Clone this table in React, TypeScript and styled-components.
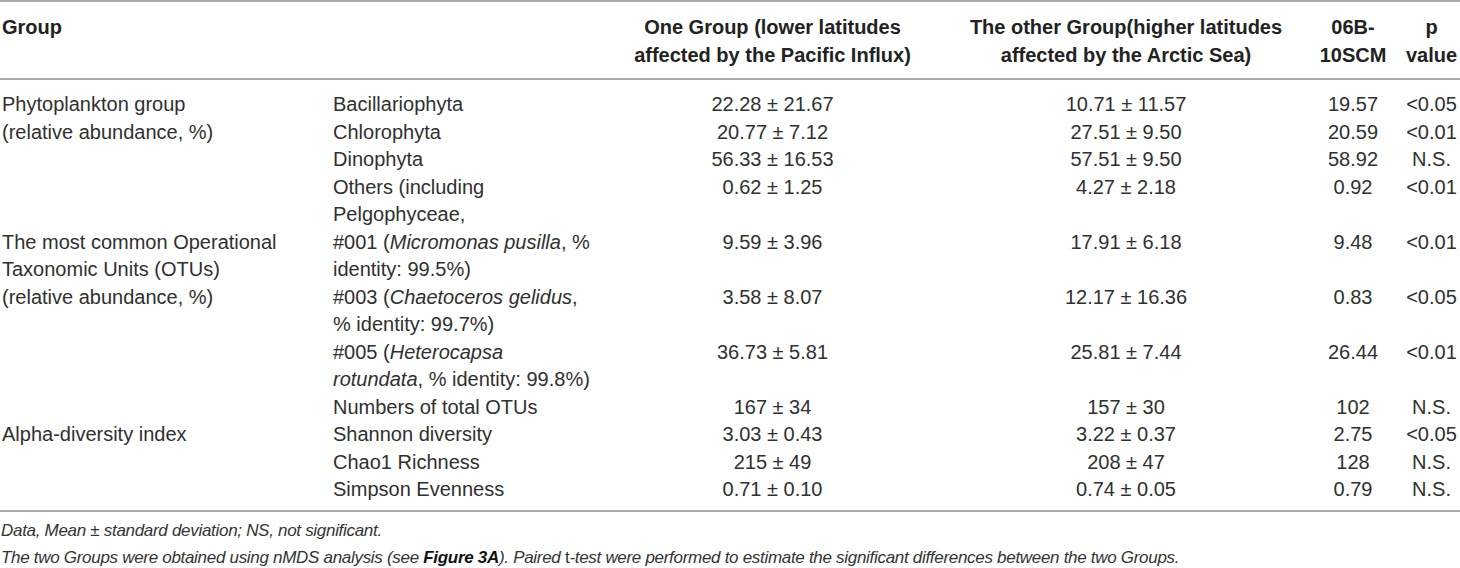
import styled, { createGlobalStyle } from "styled-components";

const GlobalStyle = createGlobalStyle`
  html, body {
    margin: 0;
    padding: 0;
    background: #ffffff;
  }
  body {
    font-family: "Liberation Sans", Arial, sans-serif;
    color: #303030;
  }
`;

const Wrapper = styled.div`
  width: 1460px;
`;

const Table = styled.table`
  width: 1460px;
  table-layout: fixed;
  border-collapse: collapse;
  font-size: 20px;
  line-height: 27.5px;
  border-top: 2px solid #a9a9a9;
  border-bottom: 2px solid #a9a9a9;
`;

const HeadCell = styled.th<{ $align?: string }>`
  text-align: ${(p) => p.$align || "center"};
  vertical-align: top;
  font-weight: bold;
  color: #222222;
  padding: 12px 2px 9px;
  border-bottom: 2px solid #a9a9a9;
`;

const Cell = styled.td<{ $align?: string }>`
  text-align: ${(p) => p.$align || "center"};
  vertical-align: top;
  padding: 0 2px;
  tr:first-child > & {
    padding-top: 11px;
  }
  tr:last-child > & {
    padding-bottom: 6px;
  }
`;

const Notes = styled.div`
  font-style: italic;
  font-size: 17px;
  letter-spacing: -0.3px;
  line-height: 27.5px;
  color: #333333;
  padding-top: 5px;
  padding-left: 1px;
`;

const Strong = styled.b`
  font-weight: bold;
  color: #111111;
`;

const Upright = styled.span`
  font-style: normal;
`;

type Row = {
  group?: string[];
  span?: number;
  label: React.ReactNode;
  a: string;
  b: string;
  ref06: string;
  p: string;
};

const rows: Row[] = [
  { group: ["Phytoplankton group", "(relative abundance, %)"], span: 4, label: "Bacillariophyta", a: "22.28 ± 21.67", b: "10.71 ± 11.57", ref06: "19.57", p: "<0.05" },
  { label: "Chlorophyta", a: "20.77 ± 7.12", b: "27.51 ± 9.50", ref06: "20.59", p: "<0.01" },
  { label: "Dinophyta", a: "56.33 ± 16.53", b: "57.51 ± 9.50", ref06: "58.92", p: "N.S." },
  { label: "Others (including Pelgophyceae,", a: "0.62 ± 1.25", b: "4.27 ± 2.18", ref06: "0.92", p: "<0.01" },
  {
    group: ["The most common Operational", "Taxonomic Units (OTUs)", "(relative abundance, %)"],
    span: 4,
    label: (<>#001 (<i>Micromonas pusilla</i>, % identity: 99.5%)</>),
    a: "9.59 ± 3.96", b: "17.91 ± 6.18", ref06: "9.48", p: "<0.01",
  },
  { label: (<>#003 (<i>Chaetoceros gelidus</i>, % identity: 99.7%)</>), a: "3.58 ± 8.07", b: "12.17 ± 16.36", ref06: "0.83", p: "<0.05" },
  { label: (<>#005 (<i>Heterocapsa rotundata</i>, % identity: 99.8%)</>), a: "36.73 ± 5.81", b: "25.81 ± 7.44", ref06: "26.44", p: "<0.01" },
  { label: "Numbers of total OTUs", a: "167 ± 34", b: "157 ± 30", ref06: "102", p: "N.S." },
  { group: ["Alpha-diversity index"], span: 3, label: "Shannon diversity", a: "3.03 ± 0.43", b: "3.22 ± 0.37", ref06: "2.75", p: "<0.05" },
  { label: "Chao1 Richness", a: "215 ± 49", b: "208 ± 47", ref06: "128", p: "N.S." },
  { label: "Simpson Evenness", a: "0.71 ± 0.10", b: "0.74 ± 0.05", ref06: "0.79", p: "N.S." },
];

export default function App() {
  return (
    <Wrapper>
      <GlobalStyle />
      <Table>
        <colgroup>
          <col style={{ width: 331 }} />
          <col style={{ width: 265 }} />
          <col style={{ width: 353 }} />
          <col style={{ width: 354 }} />
          <col style={{ width: 100 }} />
          <col style={{ width: 57 }} />
        </colgroup>
        <thead>
          <tr>
            <HeadCell $align="left">Group</HeadCell>
            <HeadCell />
            <HeadCell>
              One Group (lower latitudes
              <br />
              affected by the Pacific Influx)
            </HeadCell>
            <HeadCell>
              The other Group(higher latitudes
              <br />
              affected by the Arctic Sea)
            </HeadCell>
            <HeadCell>06B-10SCM</HeadCell>
            <HeadCell>p value</HeadCell>
          </tr>
        </thead>
        <tbody>
          {rows.map((r, i) => (
            <tr key={i}>
              {r.group && (
                <Cell $align="left" rowSpan={r.span}>
                  {r.group.map((g, j) => (
                    <div key={j}>{g}</div>
                  ))}
                </Cell>
              )}
              <Cell $align="left">{r.label}</Cell>
              <Cell>{r.a}</Cell>
              <Cell>{r.b}</Cell>
              <Cell>{r.ref06}</Cell>
              <Cell>{r.p}</Cell>
            </tr>
          ))}
        </tbody>
      </Table>
      <Notes>
        <div>Data, Mean ± standard deviation; NS, not significant.</div>
        <div>
          The two Groups were obtained using nMDS analysis (see <Strong>Figure 3A</Strong>). Paired{" "}
          <Upright>t</Upright>-test were performed to estimate the significant differences between the two Groups.
        </div>
      </Notes>
    </Wrapper>
  );
}
